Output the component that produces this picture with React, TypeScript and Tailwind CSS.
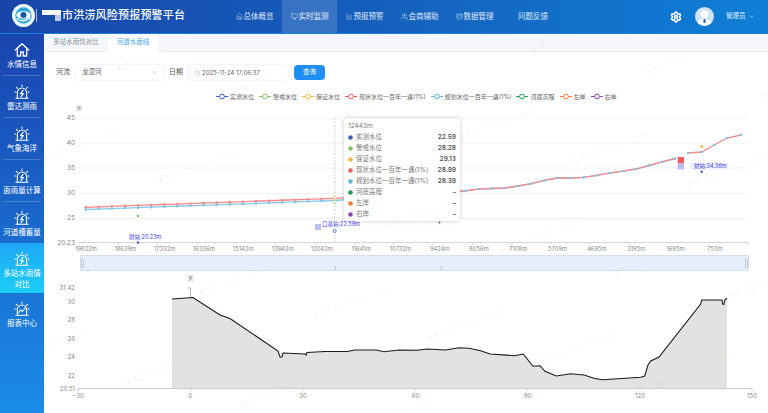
import { BarChart3, ChevronDown, Clock, Database, Home, Monitor, Settings, Users } from "lucide-react";

const navItems = [
  { label: "总体概览", Icon: Home, cls: "w-[55px] ml-[227px]" },
  { label: "实时监测", Icon: Monitor, cls: "w-[55px] bg-white/15" },
  { label: "预报预警", Icon: BarChart3, cls: "w-[55px]" },
  { label: "会商辅助", Icon: Users, cls: "w-[55px]" },
  { label: "数据管理", Icon: Database, cls: "w-[55px]" },
  { label: "问题反馈", Icon: null, cls: "w-[62px]" },
];

const legend = [
  { label: "实测水位", color: "#3f5fc4" },
  { label: "警戒水位", color: "#7dc95e" },
  { label: "保证水位", color: "#f5b93c" },
  { label: "现状水位一百年一遇(1%)", color: "#ee5a5a" },
  { label: "规划水位一百年一遇(1%)", color: "#62b8e0" },
  { label: "河底高程", color: "#1f9d57" },
  { label: "左岸", color: "#f57c3a" },
  { label: "右岸", color: "#8e44ad" },
];

const tooltipRows = [
  { label: "实测水位", value: "22.59", color: "#3f5fc4" },
  { label: "警戒水位", value: "28.28", color: "#7dc95e" },
  { label: "保证水位", value: "29.13", color: "#f5b93c" },
  { label: "现状水位一百年一遇(1%)", value: "28.99", color: "#ee5a5a" },
  { label: "规划水位一百年一遇(1%)", value: "28.39", color: "#62b8e0" },
  { label: "河底高程", value: "–", color: "#1f9d57" },
  { label: "左岸", value: "–", color: "#f57c3a" },
  { label: "右岸", value: "–", color: "#8e44ad" },
];

const xLabels = ["19822m", "18639m", "17332m", "16336m", "15143m", "13943m", "12043m", "11641m", "10732m", "9424m", "8056m", "7108m", "5709m", "4695m", "3195m", "1695m", "753m"];

const px = (i: number) => 85.7 + 13.1 * i;

// red line read off the picture, sampled at each section
const redAnchors = [[85.7, 207.3], [243, 201.7], [334.7, 198.3], [460, 191.5], [466, 190.7], [479, 189], [505, 188], [518, 186], [531, 183.7], [544, 180.5], [557, 178], [570, 178], [583, 177.5], [596, 175.5], [610, 173], [623, 171], [636, 169], [649, 165.5], [662, 162], [675.2, 158.5]];

function lerpRed(x: number) {
  for (let i = 1; i < redAnchors.length; i++) {
    const [x0, y0] = redAnchors[i - 1];
    const [x1, y1] = redAnchors[i];
    if (x <= x1) return y0 + ((x - x0) / (x1 - x0)) * (y1 - y0);
  }
  return redAnchors[redAnchors.length - 1][1];
}

const redPts = Array.from({ length: 46 }, (_, i) => [px(i), lerpRed(px(i))]);
const bluePts = redPts.map(([x, y], i) => [x, y + Math.max(0, 2.2 - (i > 19 ? (i - 19) * 0.3 : 0))]);
const redRight = [[688, 153], [701.7, 152], [714, 145], [727, 138], [741, 135]];

const toPts = (a: number[][]) => a.map((p) => p.join(",")).join(" ");

const terrain = [[172, 299], [193, 297.5], [220, 315], [230, 318.5], [278, 351], [280, 357], [282, 357], [283, 353], [305, 354], [306, 355], [307, 352.5], [325, 351.5], [347, 351.5], [355, 350], [376, 350], [384, 351.7], [399, 350], [417, 350.3], [427, 349], [445.7, 350], [459, 347.7], [469, 348.3], [480.7, 350.7], [490, 354], [514, 355.7], [523.3, 354], [533, 366.3], [540, 365.7], [545, 371.3], [556.3, 376], [570.7, 373.7], [584, 375], [594, 378.3], [602.3, 379.7], [640.7, 377.3], [644.7, 376], [648, 365], [650.7, 361], [659, 357], [700.7, 304], [701.7, 300], [722, 300], [722.7, 304.3], [724, 304.3], [724.7, 300], [727, 298.3]];

const watermarks: number[][] = [];
for (let k = -4; k < 10; k++) {
  for (let m = -3; m < 7; m++) {
    const x = 157 + 114 * k - 73 * m;
    const y = 57 + 23 * k + 89 * m;
    if (x > 10 && x < 805 && y > 20 && y < 430) watermarks.push([x, y]);
  }
}

function Siren({ chart }: { chart?: boolean }) {
  return (
    <svg width="16" height="16" viewBox="0 0 24 24" fill="none" stroke="white" strokeWidth="1.6" strokeLinecap="round" strokeLinejoin="round">
      <path d="M5 21V13a7 7 0 0 1 14 0v8" />
      <path d="M3 21.5h18" />
      <path d="M12 1.5v2M3.5 5l1.8 1.5M20.5 5l-1.8 1.5M1.5 12h1.5M21 12h1.5" />
      {chart ? (
        <path d="M7 17l3-3.5 2.5 2 4.5-5" />
      ) : (
        <path d="M13.5 9.5L10 14.5h4L10.5 19" strokeWidth="1.8" />
      )}
    </svg>
  );
}

function SideItem({ label, active, house, chart }: { label: string; active?: boolean; house?: boolean; chart?: boolean }) {
  return (
    <div className={active ? "flex h-[50px] flex-col items-center bg-gradient-to-b from-[#1fa8f5] to-[#1ccdf7] pt-[8px]" : "flex h-[41px] flex-col items-center pt-[8px]"}>
      {house ? (
        <svg width="16" height="16" viewBox="0 0 24 24" fill="none" stroke="white" strokeWidth="2" strokeLinecap="round" strokeLinejoin="round">
          <path d="M2 12L12 2.5 22 12" />
          <path d="M5 10v11h5v-6h4v6h5V10" />
        </svg>
      ) : (
        <Siren chart={chart} />
      )}
      <span className="mt-[1px] w-[40px] text-center text-[7.5px] leading-[11px] text-white">{label}</span>
    </div>
  );
}

function Divider() {
  return <div className="mx-[3px] h-px bg-white/20" />;
}

function LegendIcon({ color }: { color: string }) {
  return (
    <svg width="12" height="7" viewBox="0 0 12 7" fill="none">
      <path d="M0 3.5h12" stroke={color} strokeWidth="1" />
      <circle cx="6" cy="3.5" r="2.4" fill="white" stroke={color} strokeWidth="1" />
    </svg>
  );
}

export default function App() {
  return (
    <div className="flex h-[413px] w-[768px] flex-col overflow-hidden bg-white font-['Inter','Noto_Sans_CJK_SC',sans-serif]">
      {/* Header */}
      <header className="relative flex h-[34px] shrink-0 items-center border-b border-[#1a80e0] bg-gradient-to-r from-[#1845a8] via-[#1560bd] to-[#0f7fd6]">
        <div className="absolute left-[12px] top-[4px] flex items-center">
          <svg width="23" height="23" viewBox="0 0 24 24">
            <circle cx="12" cy="12" r="12" fill="#eef7fb" />
            <circle cx="12" cy="12" r="8.5" fill="#2ea7dd" />
            <ellipse cx="12" cy="11.500" rx="7.500" ry="4" fill="white" />
            <circle cx="12" cy="11.500" r="3.200" fill="#1856a8" />
            <path d="M5 15c3.500 3.500 10 3.500 14-1" stroke="white" strokeWidth="1.400" fill="none" />
          </svg>
          <div className="ml-[1px] h-[13px] w-px bg-white/60" />
          <div className="ml-[5px] flex items-start">
            <div className="h-[5px] w-[13px] bg-white" />
            <div className="h-[5px] w-[6px] bg-white" />
            <div className="mt-[5px] h-[6px] w-[6px] -translate-x-[6px] bg-[#b9c9e6]" />
          </div>
          <span className="-ml-[5px] text-[11px] font-medium tracking-[0.2px] text-white">市洪涝风险预报预警平台</span>
        </div>
        <nav className="flex h-full">
          {navItems.map(({ label, Icon, cls }) => (
            <div key={label} className={`flex h-full items-center justify-center gap-[1px] text-[7.500px] text-white/85 ${cls}`}>
              {Icon && <Icon size={7} strokeWidth={1.5} />}
              {label}
            </div>
          ))}
        </nav>
        <Settings size={12} strokeWidth={3} className="ml-[106px] text-white" />
        <svg width="19" height="19" viewBox="0 0 24 24" className="ml-[13px]">
          <circle cx="12" cy="12" r="12" fill="#cfe3f7" />
          <circle cx="12" cy="9" r="4.8" fill="white" />
          <path d="M3.5 20c1.5-4 5-5.5 8.5-5.5s7 1.500 8.500 5.500a12 12 0 0 1-17 0z" fill="white" />
          <path d="M11 15h2l.5 5h-3z" fill="#1e5fb5" />
        </svg>
        <span className="ml-[12px] text-[6.500px] text-white/85">管理员</span>
        <ChevronDown size={7} className="ml-[2px] text-white/80" />
      </header>

      <div className="flex min-h-0 flex-1">
        {/* Sidebar */}
        <aside className="w-[44px] shrink-0 bg-gradient-to-b from-[#1a44ae] to-[#1b8ce9]">
          <SideItem label="水情信息" house />
          <Divider />
          <SideItem label="雷达测雨" />
          <Divider />
          <SideItem label="气象海洋" />
          <Divider />
          <SideItem label="面雨量计算" />
          <Divider />
          <SideItem label="河道槽蓄量" />
          <SideItem label="多站水雨情对比" active />
          <SideItem label="报表中心" chart />
        </aside>

        {/* Main */}
        <main className="relative flex min-w-0 flex-1 flex-col overflow-hidden">
          <div className="flex h-[18px] shrink-0 border-b border-[#e9ecf2] bg-[#f5f7fb] text-[6.500px]">
            <div className="flex w-[64px] items-center justify-center text-[#8a8f99]">多站水雨情对比</div>
            <div className="flex h-[18px] w-[50px] items-center justify-center bg-white text-[#4a9ff0]">河道水面线</div>
          </div>

          <div className="mt-[13px] flex h-[15px] shrink-0 items-center pl-[12px] text-[6.500px] text-[#666]">
            <span className="text-[7px] text-[#555]">河流</span>
            <div className="ml-[5px] flex h-[15px] w-[89px] items-center justify-between rounded-sm pl-[7px] pr-[6px] shadow-[0_0_2px_rgba(0,0,0,0.15)]">
              龙潭河
              <ChevronDown size={7} className="text-[#bbb]" />
            </div>
            <span className="ml-[5px] text-[7px] text-[#555]">日期</span>
            <div className="ml-[6px] flex h-[15px] w-[99px] items-center gap-[2px] rounded-sm pl-[5px] text-[6px] shadow-[0_0_2px_rgba(0,0,0,0.15)]">
              <Clock size={6} className="text-[#bbb]" />
              2025-11-24 17:06:37
            </div>
            <div className="ml-[6px] flex h-[15px] w-[31px] items-center justify-center rounded-sm bg-[#1e90f5] text-white">查询</div>
          </div>

          <div className="mt-[10px] flex h-[12px] shrink-0 items-center pl-[172px] text-[6px] text-[#666]">
            {legend.map((l) => (
              <div key={l.label} className="mr-[5px] flex items-center gap-[2px]">
                <LegendIcon color={l.color} />
                {l.label}
              </div>
            ))}
          </div>

          {/* Water level chart */}
          <svg className="h-[150px] w-[724px] shrink-0" viewBox="44 102 724 150" fontSize="6.5" fill="#888">
            <text x="79" y="110" fontSize="5.5" textAnchor="middle">米</text>
            {[118, 143, 168, 193.5, 218.5].map((y) => (
              <line key={y} x1="79" x2="748" y1={y} y2={y} stroke="#f0f2f7" strokeWidth="1" />
            ))}
            {["45", "40", "35", "30", "25"].map((t, i) => (
              <text key={t} x="75" y={120 + 25.1 * i} textAnchor="end">{t}</text>
            ))}
            <text x="75" y="245" textAnchor="end">20.23</text>
            <line x1="79" x2="748" y1="242.5" y2="242.5" stroke="#d6d6d6" strokeWidth="1.2" />
            {Array.from({ length: 18 }, (_, i) => (
              <line key={i} x1={79 + 39.35 * i} x2={79 + 39.35 * i} y1="242.5" y2="245" stroke="#ccc" strokeWidth="0.7" />
            ))}
            {xLabels.map((t, i) => (
              <text key={t} x={86 + 39.3 * i} y="251" textAnchor="middle" fontSize="5.800">{t}</text>
            ))}

            <polyline points={toPts(bluePts)} fill="none" stroke="#8cc8ea" strokeWidth="1.300" />
            <polyline points={toPts(redPts)} fill="none" stroke="#f58a8a" strokeWidth="1.300" />
            <polyline points={toPts(redRight)} fill="none" stroke="#f58a8a" strokeWidth="1.300" />
            {redPts.slice(0, 25).map(([x, y], i) => (
              <circle key={i} cx={x} cy={y} r="1.300" fill="#f58a8a" />
            ))}
            {bluePts.map(([x, y], i) => (
              <circle key={i} cx={x} cy={y} r="1.300" fill="#7cc4e8" />
            ))}
            {redRight.map(([x, y]) => (
              <circle key={x} cx={x} cy={y} r="1.300" fill="#7cc4e8" />
            ))}

            <line x1="334.7" x2="334.7" y1="118" y2="242" stroke="#c3c7d0" strokeWidth="0.800" strokeDasharray="2 1.500" />
            <circle cx="334.7" cy="198.300" r="1.700" fill="white" stroke="#f09a3a" strokeWidth="0.700" />
            <circle cx="334.7" cy="201.800" r="1.700" fill="white" stroke="#7dc95e" strokeWidth="0.700" />

            {/* station markers */}
            <circle cx="138" cy="216" r="1.300" fill="#7dc95e" />
            <circle cx="138" cy="242.500" r="1.300" fill="#3f5fc4" />
            <text x="129" y="238.500" fontSize="5.500" fill="#3c3cf0">财站:20.23m</text>
            <rect x="315" y="224" width="6" height="6" fill="#b9bdf5" />
            <text x="322" y="225.500" fontSize="5.500" fill="#3c3cf0">口基站:22.59m</text>
            <circle cx="334.7" cy="231" r="1.500" fill="white" stroke="#3f5fc4" strokeWidth="0.800" />
            <circle cx="439.500" cy="222.500" r="1" fill="#3f5fc4" />
            <rect x="677.700" y="157" width="6.300" height="6.500" fill="#f75c5c" />
            <rect x="677.700" y="163.500" width="6.300" height="6" fill="#b9bdf5" />
            <rect x="690" y="163" width="38" height="6.500" fill="#eef0fc" />
            <text x="694" y="167.800" fontSize="5.500" fill="#3c3cf0">财站:34.36m</text>
            <circle cx="701.700" cy="171.700" r="1.200" fill="#3f5fc4" />
            <circle cx="701.700" cy="146.500" r="1.500" fill="#f5b93c" />
          </svg>

          {/* Zoom slider */}
          <div className="relative ml-[36px] mt-[3px] flex h-[16px] w-[669px] shrink-0 items-center justify-between border border-[#d5dff2] bg-[#e8effc]">
            <div className="h-[9px] w-[3px] rounded-[1px] border border-[#bcc6d8] bg-white" />
            <div className="absolute left-[254px] top-[10px] h-[5px] w-px bg-[#b5c8ee]" />
            <div className="absolute left-[360px] top-[10px] h-[5px] w-px bg-[#b5c8ee]" />
            <div className="absolute left-[628px] top-[4px] h-[11px] w-px bg-[#dbe4f5]" />
            <div className="h-[9px] w-[3px] rounded-[1px] border border-[#bcc6d8] bg-white" />
          </div>

          {/* Cross-section chart */}
          <svg className="min-h-0 w-[724px] flex-1" viewBox="44 271 724 142" fontSize="6" fill="#888">
            <text x="190.500" y="280" fontSize="5.500" textAnchor="middle">米</text>
            <line x1="190.500" x2="190.500" y1="288" y2="298" stroke="#999" strokeWidth="0.700" />
            <line x1="187.500" x2="190.500" y1="288" y2="288" stroke="#999" strokeWidth="0.700" />
            <polygon points={`172,388 ${toPts(terrain)} 727,388`} fill="#e2e2e0" />
            <polyline points={toPts(terrain)} fill="none" stroke="#1a1a1a" strokeWidth="1.100" />
            <line x1="78" x2="752" y1="388.500" y2="388.500" stroke="#c9c9c9" strokeWidth="1" />
            {[["31.42", 290], ["30", 303.500], ["28", 322], ["26", 340.500], ["24", 359], ["22", 377.500], ["20.51", 391]].map(([t, y]) => (
              <text key={t} x="75" y={y} textAnchor="end">{t}</text>
            ))}
            {[["−30", 78], ["0", 190.500], ["30", 303], ["60", 415.500], ["90", 527.500], ["120", 640], ["150", 752]].map(([t, x]) => (
              <g key={t}>
                <line x1={x} x2={x} y1="388.500" y2="391" stroke="#bbb" strokeWidth="0.700" />
                <text x={x} y="398" textAnchor="middle">{t}</text>
              </g>
            ))}
          </svg>

          {/* Tooltip */}
          <div className="absolute left-[300px] top-[84px] h-[103px] w-[116px] rounded-sm bg-white px-[4px] pt-[3px] text-[6.500px] text-[#777] shadow-[0_0_4px_rgba(0,0,0,0.2)]">
            <div className="h-[11px] leading-[11px]">12443m</div>
            {tooltipRows.map((r) => (
              <div key={r.label} className="flex h-[11px] items-center">
                <svg width="5" height="5" viewBox="0 0 5 5" className="mr-[3px]">
                  <circle cx="2.500" cy="2.500" r="2.300" fill={r.color} />
                </svg>
                <span className="flex-1">{r.label}</span>
                <span className="font-semibold text-[#555]">{r.value}</span>
              </div>
            ))}
          </div>

          {/* Watermark */}
          <svg className="pointer-events-none absolute left-0 top-0 h-[379px] w-[724px]" viewBox="44 34 724 379" fontSize="6.500" fill="#000" fillOpacity="0.06">
            {watermarks.map(([x, y]) => (
              <text key={`${x}-${y}`} x={x} y={y} textAnchor="middle" transform={`rotate(-20 ${x} ${y})`}>管理员 2025/11/24 17:04:52</text>
            ))}
          </svg>
        </main>
      </div>
    </div>
  );
}
